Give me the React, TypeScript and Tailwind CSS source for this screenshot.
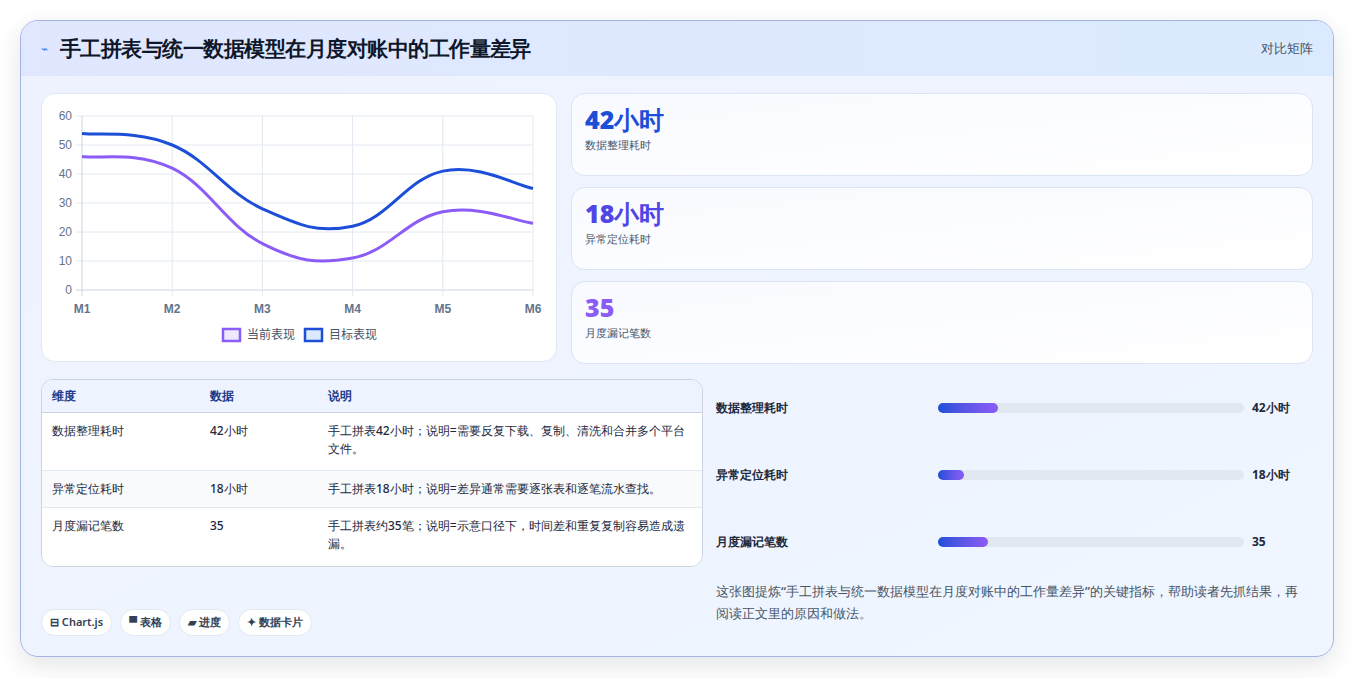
import React from "react";

const X0 = 80, X1 = 531, Y0 = 289, YTOP = 115;
const xs = [0, 1, 2, 3, 4, 5].map((i) => X0 + (i * (X1 - X0)) / 5);
const yv = (v: number) => Y0 - ((Y0 - YTOP) * v) / 60;

function spline(vals: number[]) {
  const p = vals.map((v, i) => [xs[i], yv(v)]);
  let d = `M${p[0][0]},${p[0][1]}`;
  const t = 0.4;
  for (let i = 0; i < p.length - 1; i++) {
    const p0 = p[i - 1] || p[i], p1 = p[i], p2 = p[i + 1], p3 = p[i + 2] || p[i + 1];
    const c1x = p1[0] + ((p2[0] - p0[0]) * t) / 2, c1y = p1[1] + ((p2[1] - p0[1]) * t) / 2;
    const c2x = p2[0] - ((p3[0] - p1[0]) * t) / 2, c2y = p2[1] - ((p3[1] - p1[1]) * t) / 2;
    d += ` C${c1x},${c1y} ${c2x},${c2y} ${p2[0]},${p2[1]}`;
  }
  return d;
}

function Chart() {
  const ox = 40, oy = 93;
  return (
    <svg width="516" height="269" viewBox={`${ox} ${oy} 516 269`} className="block">
      {[0, 10, 20, 30, 40, 50, 60].map((v) => (
        <g key={v}>
          <line x1={X0 - 6} x2={X1} y1={yv(v)} y2={yv(v)} stroke={v === 0 ? "#cbd5e1" : "#e2e8f0"} />
          <text x={X0 - 10} y={yv(v) + 4} textAnchor="end" fontSize="12" fill="#64748b" fontFamily="Liberation Sans, sans-serif">{v}</text>
        </g>
      ))}
      {xs.map((x, i) => (
        <g key={i}>
          <line x1={x} x2={x} y1={YTOP} y2={Y0 + 6} stroke={i === 0 ? "#cbd5e1" : "#e2e8f0"} />
          <text x={x} y={Y0 + 23} textAnchor="middle" fontSize="12" fontWeight="bold" fill="#64748b" fontFamily="Liberation Sans, sans-serif">M{i + 1}</text>
        </g>
      ))}
      <path d={spline([54, 50, 28, 22, 41, 35])} fill="none" stroke="#1d4ed8" strokeWidth="3" />
      <path d={spline([46, 42, 16, 11, 27, 23])} fill="none" stroke="#8b5cf6" strokeWidth="3" />
      <rect x="221" y="328" width="17" height="12" fill="#ede9fe" stroke="#8b5cf6" strokeWidth="2.5" />
      <text x="245" y="338" fontSize="12" fill="#475569" fontFamily="Noto Sans CJK SC, sans-serif">当前表现</text>
      <rect x="303" y="328" width="17" height="12" fill="#dbeafe" stroke="#1d4ed8" strokeWidth="2.5" />
      <text x="327" y="338" fontSize="12" fill="#475569" fontFamily="Noto Sans CJK SC, sans-serif">目标表现</text>
    </svg>
  );
}

const kpis = [
  { v: "42小时", l: "数据整理耗时", c: "text-[#1d4ed8]" },
  { v: "18小时", l: "异常定位耗时", c: "text-[#4f46e5]" },
  { v: "35", l: "月度漏记笔数", c: "text-[#8b5cf6]" },
];

const rows = [
  ["数据整理耗时", "42小时", "手工拼表42小时；说明=需要反复下载、复制、清洗和合并多个平台文件。"],
  ["异常定位耗时", "18小时", "手工拼表18小时；说明=差异通常需要逐张表和逐笔流水查找。"],
  ["月度漏记笔数", "35", "手工拼表约35笔；说明=示意口径下，时间差和重复复制容易造成遗漏。"],
];

const bars = [
  { l: "数据整理耗时", v: "42小时", w: "w-[60px]" },
  { l: "异常定位耗时", v: "18小时", w: "w-[26px]" },
  { l: "月度漏记笔数", v: "35", w: "w-[50px]" },
];

export default function App() {
  return (
    <div className="w-[1354px] h-[678px] bg-white p-5 font-['Noto_Sans_CJK_SC','Noto_Sans',sans-serif]">
      <div className="w-[1314px] h-[637px] rounded-[18px] border border-[#a5b4e6] bg-gradient-to-br from-[#eef2ff] to-[#eff6ff] shadow-[0_8px_24px_rgba(30,41,59,0.12)] overflow-hidden flex flex-col">
        <div className="h-[55px] shrink-0 flex items-center justify-between px-5 bg-gradient-to-r from-[#e0e7ff] to-[#dbeafe]">
          <div className="flex items-center gap-3">
            <span className="text-[#3b82f6] text-[12px]">⌁</span>
            <span className="text-[21px] font-bold text-[#0f172a] tracking-tight">手工拼表与统一数据模型在月度对账中的工作量差异</span>
          </div>
          <span className="text-[13px] text-[#475569]">对比矩阵</span>
        </div>
        <div className="flex-1 px-5 pt-[17px] flex flex-col">
          <div className="flex gap-[14px]">
            <div className="w-[516px] h-[269px] rounded-[14px] border border-[#e2e8f0] bg-white overflow-hidden">
              <Chart />
            </div>
            <div className="flex-1 flex flex-col gap-[11px]">
              {kpis.map((k) => (
                <div key={k.l} className="h-[83px] rounded-[14px] border border-[#dbe4f5] bg-gradient-to-br from-[#f8faff] to-white px-[13px] pt-[9px]">
                  <div className={`text-[25px] leading-[32px] font-black ${k.c}`}>{k.v}</div>
                  <div className="text-[11px] text-[#475569] mt-0.5">{k.l}</div>
                </div>
              ))}
            </div>
          </div>
          <div className="flex gap-[13px] mt-[15px]">
            <div className="w-[662px] flex flex-col">
              <div className="rounded-[12px] border border-[#cbd5e1] bg-white/60 overflow-hidden text-[12px] text-[#1e293b]">
                <div className="flex h-[33px] items-center border-b border-[#cbd5e1] bg-[#eef4ff] text-[#1e3a8a] font-semibold">
                  <div className="w-[168px] pl-[10px]">维度</div>
                  <div className="w-[118px]">数据</div>
                  <div className="flex-1">说明</div>
                </div>
                {rows.map((r, i) => (
                  <div key={i} className={`flex py-[9px] leading-[18px] font-medium ${i < 2 ? "border-b border-[#e2e8f0]" : ""} ${i === 1 ? "bg-[#f8fafc]" : "bg-white"} ${i !== 1 ? "min-h-[58px]" : ""}`}>
                    <div className="w-[168px] pl-[10px]">{r[0]}</div>
                    <div className="w-[118px]">{r[1]}</div>
                    <div className="flex-1 pr-[10px]">{r[2]}</div>
                  </div>
                ))}
              </div>
              <div className="flex gap-[8px] mt-[42px] text-[11px] font-semibold text-[#334155]">
                {["⊟ Chart.js", "▀ 表格", "▰ 进度", "✦ 数据卡片"].map((t) => (
                  <span key={t} className="h-[27px] px-[8px] flex items-center rounded-full bg-white border border-[#e2e8f0]">{t}</span>
                ))}
              </div>
            </div>
            <div className="flex-1 flex flex-col">
              <div className="flex flex-col gap-[47px] pt-[19px]">
                {bars.map((b) => (
                  <div key={b.l} className="flex items-center h-[20px] text-[12px] font-semibold text-[#1e293b]">
                    <div className="w-[222px]">{b.l}</div>
                    <div className="w-[306px] h-[10px] rounded-full bg-[#e2e8f0]">
                      <div className={`h-full rounded-full bg-gradient-to-r from-[#1d4ed8] to-[#8b5cf6] ${b.w}`} />
                    </div>
                    <div className="ml-[8px] font-bold">{b.v}</div>
                  </div>
                ))}
              </div>
              <p className="mt-[28px] text-[13px] leading-[22px] text-[#475569] font-medium pr-1">
                这张图提炼“手工拼表与统一数据模型在月度对账中的工作量差异”的关键指标，帮助读者先抓结果，再阅读正文里的原因和做法。
              </p>
            </div>
          </div>
        </div>
      </div>
    </div>
  );
}
